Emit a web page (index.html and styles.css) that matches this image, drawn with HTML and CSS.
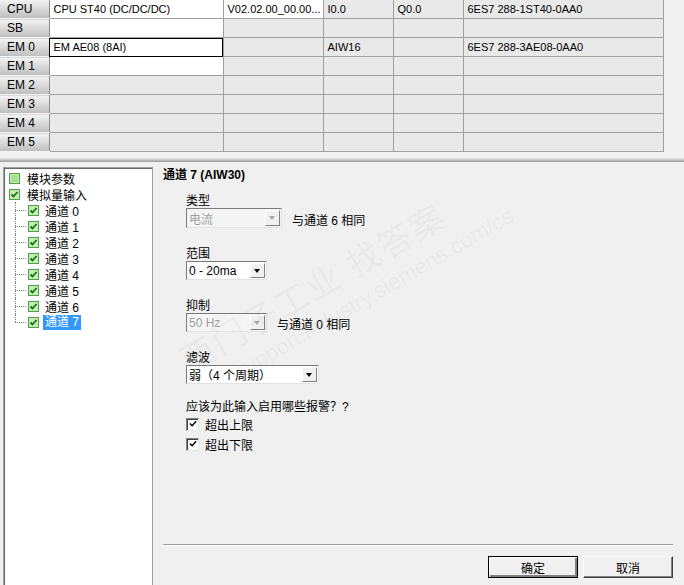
FILE: index.html
```html
<!DOCTYPE html>
<html lang="zh-CN">
<head>
    <meta charset="UTF-8">
    <title>模块参数</title>
    <link rel="stylesheet" href="styles.css">
</head>
<body>
    <!-- Module table -->
    <div class="config-pane">
        <table class="module-grid">
            <colgroup>
                <col style="width: 49px">
                <col style="width: 174px">
                <col style="width: 100px">
                <col style="width: 70px">
                <col style="width: 70px">
                <col style="width: 200px">
            </colgroup>
            <tr>
                <th>CPU</th>
                <td class="white">CPU ST40 (DC/DC/DC)</td>
                <td class="white">V02.02.00_00.00...</td>
                <td>I0.0</td>
                <td>Q0.0</td>
                <td>6ES7 288-1ST40-0AA0</td>
            </tr>
            <tr><th>SB</th><td class="white"></td><td></td><td></td><td></td><td></td></tr>
            <tr>
                <th>EM 0</th>
                <td class="white selected">EM AE08 (8AI)</td>
                <td></td>
                <td>AIW16</td>
                <td></td>
                <td>6ES7 288-3AE08-0AA0</td>
            </tr>
            <tr><th>EM 1</th><td class="white"></td><td></td><td></td><td></td><td></td></tr>
            <tr><th>EM 2</th><td></td><td></td><td></td><td></td><td></td></tr>
            <tr><th>EM 3</th><td></td><td></td><td></td><td></td><td></td></tr>
            <tr><th>EM 4</th><td></td><td></td><td></td><td></td><td></td></tr>
            <tr><th>EM 5</th><td></td><td></td><td></td><td></td><td></td></tr>
        </table>
    </div>

    <div class="splitter"></div>

    <div class="params">
        <!-- Parameter tree -->
        <div class="tree">
            <div class="node">
                <svg class="chk" viewBox="0 0 11 11"><rect x="0.5" y="0.5" width="10" height="10" fill="#c4ecb0" stroke="#4f9f4f"/><rect x="2" y="2" width="7" height="7" fill="#a8e090"/></svg>
                <span>模块参数</span>
            </div>
            <div class="node">
                <svg class="chk" viewBox="0 0 11 11"><rect x="0.5" y="0.5" width="10" height="10" fill="#c4ecb0" stroke="#4f9f4f"/><path d="M2.5 5.5 L4.5 7.5 L8.5 3" fill="none" stroke="#1d6e1d" stroke-width="1.8"/></svg>
                <span>模拟量输入</span>
            </div>
            <div class="children">
                <div class="node"><svg class="chk" viewBox="0 0 11 11"><rect x="0.5" y="0.5" width="10" height="10" fill="#c4ecb0" stroke="#4f9f4f"/><path d="M2.5 5.5 L4.5 7.5 L8.5 3" fill="none" stroke="#1d6e1d" stroke-width="1.8"/></svg><span>通道 0</span></div>
                <div class="node"><svg class="chk" viewBox="0 0 11 11"><rect x="0.5" y="0.5" width="10" height="10" fill="#c4ecb0" stroke="#4f9f4f"/><path d="M2.5 5.5 L4.5 7.5 L8.5 3" fill="none" stroke="#1d6e1d" stroke-width="1.8"/></svg><span>通道 1</span></div>
                <div class="node"><svg class="chk" viewBox="0 0 11 11"><rect x="0.5" y="0.5" width="10" height="10" fill="#c4ecb0" stroke="#4f9f4f"/><path d="M2.5 5.5 L4.5 7.5 L8.5 3" fill="none" stroke="#1d6e1d" stroke-width="1.8"/></svg><span>通道 2</span></div>
                <div class="node"><svg class="chk" viewBox="0 0 11 11"><rect x="0.5" y="0.5" width="10" height="10" fill="#c4ecb0" stroke="#4f9f4f"/><path d="M2.5 5.5 L4.5 7.5 L8.5 3" fill="none" stroke="#1d6e1d" stroke-width="1.8"/></svg><span>通道 3</span></div>
                <div class="node"><svg class="chk" viewBox="0 0 11 11"><rect x="0.5" y="0.5" width="10" height="10" fill="#c4ecb0" stroke="#4f9f4f"/><path d="M2.5 5.5 L4.5 7.5 L8.5 3" fill="none" stroke="#1d6e1d" stroke-width="1.8"/></svg><span>通道 4</span></div>
                <div class="node"><svg class="chk" viewBox="0 0 11 11"><rect x="0.5" y="0.5" width="10" height="10" fill="#c4ecb0" stroke="#4f9f4f"/><path d="M2.5 5.5 L4.5 7.5 L8.5 3" fill="none" stroke="#1d6e1d" stroke-width="1.8"/></svg><span>通道 5</span></div>
                <div class="node"><svg class="chk" viewBox="0 0 11 11"><rect x="0.5" y="0.5" width="10" height="10" fill="#c4ecb0" stroke="#4f9f4f"/><path d="M2.5 5.5 L4.5 7.5 L8.5 3" fill="none" stroke="#1d6e1d" stroke-width="1.8"/></svg><span>通道 6</span></div>
                <div class="node"><svg class="chk" viewBox="0 0 11 11"><rect x="0.5" y="0.5" width="10" height="10" fill="#c4ecb0" stroke="#4f9f4f"/><path d="M2.5 5.5 L4.5 7.5 L8.5 3" fill="none" stroke="#1d6e1d" stroke-width="1.8"/></svg><span class="active">通道 7</span></div>
            </div>
        </div>

        <!-- Channel settings -->
        <div class="panel">
            <div class="panel-title">通道 7 (AIW30)</div>

            <div class="form">
                <div class="field first">
                    <div class="label">类型</div>
                    <div class="row">
                        <div class="combo disabled wide"><span class="value">电流</span><span class="arrow"></span></div>
                        <span class="note">与通道 6 相同</span>
                    </div>
                </div>

                <div class="field">
                    <div class="label">范围</div>
                    <div class="combo"><span class="value">0 - 20ma</span><span class="arrow"></span></div>
                </div>

                <div class="field">
                    <div class="label">抑制</div>
                    <div class="row">
                        <div class="combo disabled"><span class="value">50 Hz</span><span class="arrow"></span></div>
                        <span class="note">与通道 0 相同</span>
                    </div>
                </div>

                <div class="field">
                    <div class="label">滤波</div>
                    <div class="combo long"><span class="value">弱（4 个周期）</span><span class="arrow"></span></div>
                </div>

                <div class="question">应该为此输入启用哪些报警？?</div>
                <div class="check-row">
                    <span class="checkbox"><svg viewBox="0 0 9 9"><path d="M1 4 L3.5 6.5 L8 1.5" fill="none" stroke="#000" stroke-width="1.6"/></svg></span>
                    <span>超出上限</span>
                </div>
                <div class="check-row">
                    <span class="checkbox"><svg viewBox="0 0 9 9"><path d="M1 4 L3.5 6.5 L8 1.5" fill="none" stroke="#000" stroke-width="1.6"/></svg></span>
                    <span>超出下限</span>
                </div>
            </div>

            <div class="footer">
                <button class="btn default">确定</button>
                <button class="btn">取消</button>
            </div>
        </div>
    </div>

    <!-- Watermark over the screenshot -->
    <div class="watermark">
        <div class="wm-big">西门子工业 找答案</div>
        <div class="wm-small">support.industry.siemens.com/cs</div>
    </div>
</body>
</html>
```

FILE: styles.css
```css
body {
    margin: 0;
    height: 100vh;
    overflow: hidden;
    display: flex;
    flex-direction: column;
    background-color: #f0f0f0;
    font-family: 'Liberation Sans', 'Noto Sans CJK SC', sans-serif;
    font-size: 12px;
    color: #000;
}

/* Top table */
.config-pane {
    height: 157px;
    flex: none;
}

.module-grid {
    border-collapse: collapse;
    table-layout: fixed;
    width: 663px;
    font-size: 11px;
}

.module-grid th,
.module-grid td {
    height: 18px;
    line-height: 18px;
    padding: 0 4px;
    white-space: nowrap;
    overflow: hidden;
}

.module-grid th {
    text-align: left;
    font-weight: normal;
    padding-left: 7px;
    background: linear-gradient(#f4f4f4, #d6d6d6 55%, #bdbdbd);
    border-bottom: 1px solid #f4f4f4;
    border-right: 1px solid #8c8c8c;
    font-size: 12px;
}

.module-grid td {
    background-color: #e9e9e9;
    border-right: 1px solid #a0a0a0;
    border-bottom: 1px solid #a0a0a0;
}

.module-grid td.white {
    background-color: #fff;
}

.module-grid td.selected {
    outline: 1px solid #000;
    outline-offset: -1px;
}

.splitter {
    flex: none;
    height: 5px;
    background: linear-gradient(#fafafa, #d6d6d6 40%, #9a9a9a);
}

/* Lower half */
.params {
    flex: 1;
    display: flex;
    min-height: 0;
}

.tree {
    flex: none;
    width: 150px;
    margin: 5px 0 0 3px;
    padding: 2px 0 0 4px;
    box-sizing: border-box;
    background-color: #fff;
    border: 1px solid #a0a0a0;
    border-bottom: none;
    box-shadow: inset 1px 1px 0 #696969;
}

.node {
    display: flex;
    align-items: center;
    height: 16px;
}

.chk {
    width: 11px;
    height: 11px;
    flex: none;
    margin-left: 1px;
    margin-right: 7px;
}

.children {
    padding-left: 7px;
}

.children .node {
    position: relative;
    padding-left: 12px;
}

.children .node::before {
    content: '';
    position: absolute;
    left: 0;
    top: 0;
    bottom: 0;
    border-left: 1px dotted #808080;
}

.children .node:last-child::before {
    bottom: 50%;
}

.children .node::after {
    content: '';
    position: absolute;
    left: 0;
    top: 50%;
    width: 11px;
    border-top: 1px dotted #808080;
}

.children .chk {
    margin-right: 6px;
}

.active {
    background-color: #3399ff;
    color: #fff;
    padding: 0 2px;
    margin-left: -2px;
    line-height: 15px;
}

.panel {
    flex: 1;
    display: flex;
    flex-direction: column;
    padding: 6px 12px 0 10px;
    min-width: 0;
}

.panel-title {
    font-weight: bold;
    line-height: 14px;
}

.form {
    padding-left: 23px;
}

.field {
    margin-top: 19px;
}

.field.first {
    margin-top: 12px;
}

.label {
    line-height: 14px;
}

.row {
    display: flex;
    align-items: center;
}

.note {
    margin-left: 10px;
    padding-top: 2px;
}

.combo {
    display: flex;
    align-items: center;
    width: 81px;
    height: 19px;
    box-sizing: border-box;
    background-color: #fff;
    border: 1px solid;
    border-color: #7a7a7a #e3e3e3 #e3e3e3 #7a7a7a;
    padding: 1px;
}

.combo.wide {
    width: 96px;
    height: 20px;
}

.combo.long {
    width: 133px;
}

.combo .value {
    flex: 1;
    padding-left: 1px;
    white-space: nowrap;
    overflow: hidden;
    font-size: 12px;
}

.combo .arrow {
    width: 15px;
    height: 100%;
    box-sizing: border-box;
    background-color: #f0f0f0;
    border: 1px solid;
    border-color: #fff #808080 #808080 #fff;
    position: relative;
}

.combo .arrow::after {
    content: '';
    position: absolute;
    left: 3px;
    top: 5px;
    border-left: 3.5px solid transparent;
    border-right: 3.5px solid transparent;
    border-top: 4px solid #000;
}

.combo.disabled {
    background-color: #f4f4f4;
    color: #a0a0a0;
}

.combo.disabled .arrow::after {
    border-top-color: #a8a8a8;
}

.question {
    margin-top: 16px;
    line-height: 14px;
}

.check-row {
    display: flex;
    align-items: center;
    height: 20px;
}

.check-row:first-of-type {
    margin-top: 2px;
}

.checkbox {
    width: 11px;
    height: 11px;
    margin: 0 6px 0 0;
    background-color: #fff;
    border: 1px solid;
    border-color: #808080 #e3e3e3 #e3e3e3 #808080;
    box-shadow: inset 1px 1px 0 #404040;
    display: flex;
    align-items: center;
    justify-content: center;
}

.checkbox svg {
    width: 8px;
    height: 8px;
}

.footer {
    margin-top: auto;
    border-top: 1px solid #a0a0a0;
    box-shadow: inset 0 1px 0 #fff;
    padding: 11px 0 7px;
    display: flex;
    justify-content: flex-end;
    gap: 5px;
    margin-right: -1px;
}

.btn {
    width: 90px;
    height: 22px;
    font-family: inherit;
    font-size: 12px;
    background-color: #f0f0f0;
    border: 1px solid;
    border-color: #fff #404040 #404040 #fff;
    box-shadow: inset -1px -1px 0 #808080;
    padding: 0;
}

.btn.default {
    border: 1px solid #000;
    box-shadow: inset 1px 1px 0 #fff, inset -2px -2px 0 #808080;
}

.watermark {
    position: absolute;
    left: 170px;
    top: 340px;
    transform: rotate(-30deg);
    transform-origin: left top;
    pointer-events: none;
    color: rgba(0, 0, 0, 0.05);
}

.wm-big {
    font-size: 34px;
    letter-spacing: 2px;
    white-space: nowrap;
}

.wm-small {
    font-size: 22px;
    margin-left: 40px;
    white-space: nowrap;
}
```
